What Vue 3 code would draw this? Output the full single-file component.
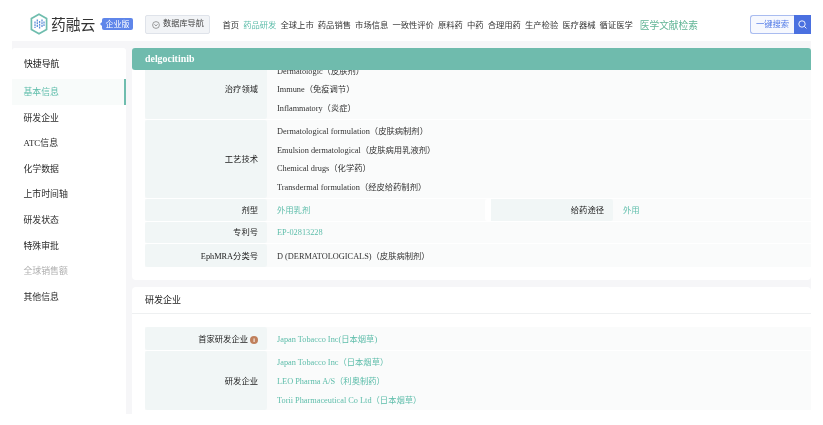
<script setup>
const navItems = ['全球上市', '药品销售', '市场信息', '一致性评价', '原料药', '中药', '合理用药', '生产检验', '医疗器械', '循证医学']
const sideItems = [
  { label: '基本信息', active: true },
  { label: '研发企业' },
  { label: 'ATC信息' },
  { label: '化学数据' },
  { label: '上市时间轴' },
  { label: '研发状态' },
  { label: '特殊审批' },
  { label: '全球销售额', muted: true },
  { label: '其他信息' }
]
const areas = ['Dermatologic（皮肤剂）', 'Immune（免疫调节）', 'Inflammatory（炎症）']
const techs = [
  'Dermatological formulation（皮肤病制剂）',
  'Emulsion dermatological（皮肤病用乳液剂）',
  'Chemical drugs（化学药）',
  'Transdermal formulation（经皮给药制剂）'
]
const firms = ['Japan Tobacco Inc（日本烟草）', 'LEO Pharma A/S（利奥制药）', 'Torii Pharmaceutical Co Ltd（日本烟草）']
</script>

<template>
  <div class="page">
    <header class="top">
      <svg class="logo" width="18" height="22" viewBox="0 0 18 22" fill="none">
        <path d="M9 1.2 16.6 5.6V16.4L9 20.8 1.4 16.4V5.6Z" stroke="#6fbdae" stroke-width="1.7" />
        <path d="M5 8.5V15M7.3 6.5V14M9.6 8V15.5M12 6.5V14M14 8.5V13" stroke="#5b8fd8" stroke-width="1.3" stroke-dasharray="2 .7" />
      </svg>
      <span class="brand">药融云</span>
      <span class="badge">企业版</span>
      <button class="db-btn">
        <svg width="8" height="8" viewBox="0 0 8 8" fill="none">
          <circle cx="4" cy="4" r="3.4" stroke="#777" stroke-width=".7" />
          <path d="M2.4 3.2 4 5l1.6-1.8" stroke="#777" stroke-width=".7" />
        </svg>
        数据库导航
      </button>
      <nav class="nav">
        <a>首页</a>
        <a class="on">药品研发</a>
        <a v-for="item in navItems" :key="item">{{ item }}</a>
      </nav>
      <span class="lit">医学文献检索</span>
      <div class="search">
        <span class="search-text">一键搜索</span>
        <span class="search-btn">
          <svg width="9" height="9" viewBox="0 0 9 9" fill="none">
            <circle cx="4" cy="4" r="3.2" stroke="#fff" stroke-width=".9" />
            <path d="m6.4 6.4 2 2" stroke="#fff" stroke-width=".9" />
          </svg>
        </span>
      </div>
    </header>

    <div class="body">
      <aside class="side">
        <div class="side-title">快捷导航</div>
        <div
          v-for="item in sideItems"
          :key="item.label"
          class="side-item"
          :class="{ active: item.active, muted: item.muted }"
        >{{ item.label }}</div>
      </aside>

      <main class="main">
        <div class="title">delgocitinib</div>
        <div class="scroll">
          <section class="card first">
            <div class="table clipped">
              <div class="row">
                <div class="label">治疗领域</div>
                <div class="value lines"><div v-for="a in areas" :key="a">{{ a }}</div></div>
              </div>
              <div class="row">
                <div class="label">工艺技术</div>
                <div class="value lines"><div v-for="t in techs" :key="t">{{ t }}</div></div>
              </div>
              <div class="row double">
                <div class="label">剂型</div>
                <div class="value link">外用乳剂</div>
                <div class="label second">给药途径</div>
                <div class="value link">外用</div>
              </div>
              <div class="row short">
                <div class="label">专利号</div>
                <div class="value link">EP-02813228</div>
              </div>
              <div class="row tall">
                <div class="label">EphMRA分类号</div>
                <div class="value">D (DERMATOLOGICALS)（皮肤病制剂）</div>
              </div>
            </div>
          </section>

          <section class="card">
            <h2 class="card-head">研发企业</h2>
            <div class="table">
              <div class="row tall">
                <div class="label">首家研发企业<i class="info">i</i></div>
                <div class="value link">Japan Tobacco Inc(日本烟草)</div>
              </div>
              <div class="row">
                <div class="label">研发企业</div>
                <div class="value lines link"><div v-for="f in firms" :key="f">{{ f }}</div></div>
              </div>
            </div>
          </section>
        </div>
      </main>
    </div>
  </div>
</template>

<style>
html, body { margin: 0; background: #fff; }
</style>

<style scoped>
.page {
  width: 823px;
  height: 425px;
  overflow: hidden;
  background: #fff;
  font-family: "Liberation Serif", "Noto Sans CJK SC", serif;
  color: #333;
  filter: blur(0.3px);
}
.top {
  height: 41px;
  box-sizing: border-box;
  padding: 13px 12px 0 30px;
  display: flex;
  align-items: flex-start;
}
.logo { flex: none; }
.brand {
  margin: 1px 0 0 3px;
  width: 47px;
  font: 14.8px/20px "Noto Sans CJK SC", sans-serif;
  color: #333;
}
.badge {
  position: relative;
  margin: 5px 0 0 4px;
  width: 31px;
  height: 12px;
  border-radius: 2px;
  background: #5f86ea;
  color: #fff;
  font: 8px/12px "Noto Sans CJK SC", sans-serif;
  text-align: center;
}
.badge::before {
  content: "";
  position: absolute;
  left: -2px;
  top: 4px;
  border: 2px solid transparent;
  border-left: 0;
  border-right-color: #5f86ea;
}
.db-btn {
  margin: 2px 0 0 12px;
  width: 65px;
  height: 19px;
  box-sizing: border-box;
  padding: 0 0 0 6px;
  display: flex;
  align-items: center;
  gap: 3px;
  background: #f2f4f7;
  border: 1px solid #dfe3ea;
  border-radius: 2px;
  color: #444;
  font: 8.2px/1 "Liberation Serif", "Noto Sans CJK SC", serif;
}
.nav {
  margin: 6px 0 0 12.5px;
  display: flex;
  gap: 4.1px;
  font-size: 8.3px;
  line-height: 13px;
  color: #333;
  white-space: nowrap;
}
.on { color: #5dbdaa; }
.lit {
  margin: 5px 0 0 7px;
  font-size: 9.7px;
  line-height: 15px;
  color: #62b596;
  white-space: nowrap;
}
.search {
  margin: 2px 0 0 auto;
  width: 61px;
  height: 19px;
  box-sizing: border-box;
  display: flex;
  border: 1px solid #a9bcf0;
  border-right: 0;
  border-radius: 3px 0 0 3px;
  background: #f6f8fe;
}
.search-text {
  flex: 1;
  text-align: center;
  font-size: 8.3px;
  line-height: 17px;
  color: #4f78e6;
}
.search-btn {
  width: 17px;
  display: flex;
  align-items: center;
  justify-content: center;
  background: #4a70e0;
  margin: -1px 0;
}
.body {
  height: 373px;
  margin: 0 12px;
  box-sizing: border-box;
  padding-top: 7px;
  display: flex;
  gap: 6px;
  background: #f6f6f8;
}
.side {
  width: 114px;
  flex: none;
  background: #fff;
  border-radius: 3px 3px 0 0;
}
.side-title {
  height: 31px;
  padding-left: 12px;
  font-size: 8.9px;
  line-height: 32px;
  color: #111;
}
.side-item {
  height: 25.6px;
  box-sizing: border-box;
  padding-left: 11.5px;
  font-size: 8.9px;
  line-height: 27.4px;
  color: #2a2a2a;
}
.side-item.active {
  background: #f8fbfa;
  color: #5dbdaa;
  border-right: 2px solid #6fbdae;
}
.side-item.muted { color: #b0b0b0; }
.main {
  flex: 1;
  min-width: 0;
  display: flex;
  flex-direction: column;
  overflow: hidden;
}
.title {
  height: 22px;
  flex: none;
  padding-left: 13px;
  background: #6fbbad;
  border-radius: 3px 3px 0 3px;
  color: #fff;
  font-size: 9.9px;
  font-weight: 700;
  line-height: 22px;
  position: relative;
  z-index: 1;
}
.scroll {
  flex: 1;
  min-height: 0;
  overflow: hidden;
  display: flex;
  flex-direction: column;
  gap: 7px;
}
.card {
  flex: none;
  background: #fff;
  border-radius: 0 0 4px 4px;
  padding-bottom: 13px;
}
.card.first { height: 210px; overflow: hidden; box-sizing: border-box; }
.card:not(.first) { border-radius: 4px 4px 0 0; }
.card-head {
  margin: 0 0 13px;
  height: 27px;
  box-sizing: border-box;
  padding-left: 13px;
  border-bottom: 1px solid #eef0f1;
  font-size: 9px;
  font-weight: 400;
  line-height: 26px;
  color: #1a1a1a;
}
.table {
  margin-left: 13px;
  display: flex;
  flex-direction: column;
  gap: 1px;
}
.clipped { margin-top: -10.5px; }
.row {
  display: grid;
  grid-template-columns: 122px 1fr;
  min-height: 22px;
  background: #fafbfb;
}
.row.short { min-height: 21px; }
.row.tall { min-height: 23px; }
.row.double {
  grid-template-columns: 122px 218px 128px 1fr;
}
.label {
  display: flex;
  align-items: center;
  justify-content: flex-end;
  padding: 2px 9px 0 0;
  background: #f1f6f6;
  border-radius: 2px;
  font-size: 8.3px;
  line-height: 12px;
  color: #222;
}
.label.second {
  background: linear-gradient(to right, #fff 6px, #f1f6f6 6px);
}
.value {
  display: flex;
  align-items: center;
  padding: 2px 0 0 10px;
  font-size: 8.3px;
  line-height: 12px;
  color: #333;
}
.short .label, .short .value { padding-top: 0; }
.lines {
  display: block;
  padding-top: 3px;
  padding-bottom: 0;
  line-height: 18.8px;
}
.link { color: #5dbdaa; }
.info {
  display: inline-block;
  width: 8px;
  height: 8px;
  margin-left: 2px;
  border-radius: 50%;
  background: #c0805c;
  color: #fff;
  font: 700 6px/8px "Liberation Sans", sans-serif;
  text-align: center;
}
</style>
